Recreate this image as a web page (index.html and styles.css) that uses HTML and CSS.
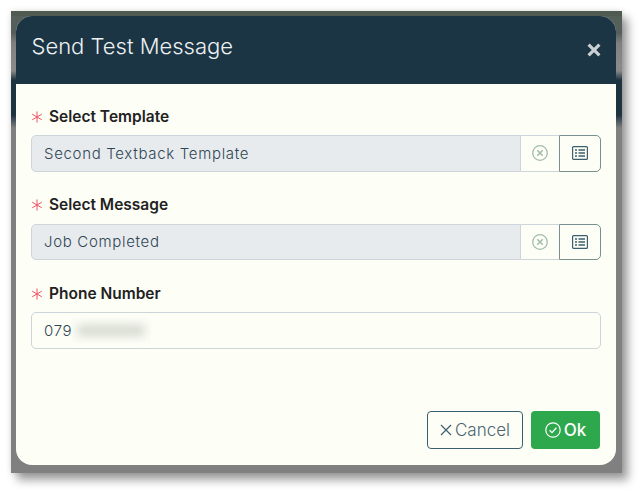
FILE: index.html
```html
<!DOCTYPE html>
<html lang="en">
<head>
<meta charset="utf-8">
<title>Send Test Message</title>
<link rel="stylesheet" href="styles.css">
</head>
<body>
<div class="backdrop">
  <div class="dialog">
    <header class="dialog-head">
      <h1 class="dialog-title">Send Test Message</h1>
      <button class="close" type="button" aria-label="Close">
        <svg viewBox="0 0 14 14" width="14" height="14"><path d="M1.6 1.6l10.8 10.8M12.4 1.6L1.6 12.4" stroke="#c9cfd2" stroke-width="3.2" fill="none"/></svg>
      </button>
    </header>
    <div class="dialog-body">
      <div class="field">
        <div class="label"><svg class="req" viewBox="0 0 12 12" width="12" height="12"><path d="M6 .4v11.2M1.2 3.2l9.6 5.6M10.8 3.2l-9.6 5.6" stroke="#ee5566" stroke-width="1" fill="none"/></svg>Select Template</div>
        <div class="input-group">
          <div class="control disabled">Second Textback Template</div>
          <div class="addon"><svg viewBox="0 0 18 18" width="18" height="18"><circle cx="9" cy="9" r="7.3" fill="none" stroke="#a3bcae" stroke-width="1.3"/><path d="M6.3 6.3l5.4 5.4M11.7 6.3l-5.4 5.4" stroke="#a3bcae" stroke-width="1.6" fill="none"/></svg></div>
          <div class="addon picker"><svg viewBox="0 0 16 14" width="16" height="14"><rect x=".6" y=".6" width="14.8" height="12.8" rx="1" fill="none" stroke="#3b5f6e" stroke-width="1.2"/><path d="M3 4h2M3 7h2M3 10h2M6.5 4H13M6.5 7H13M6.5 10H13" stroke="#3b5f6e" stroke-width="1.5" fill="none"/></svg></div>
        </div>
      </div>
      <div class="field">
        <div class="label"><svg class="req" viewBox="0 0 12 12" width="12" height="12"><path d="M6 .4v11.2M1.2 3.2l9.6 5.6M10.8 3.2l-9.6 5.6" stroke="#ee5566" stroke-width="1" fill="none"/></svg>Select Message</div>
        <div class="input-group">
          <div class="control disabled">Job Completed</div>
          <div class="addon"><svg viewBox="0 0 18 18" width="18" height="18"><circle cx="9" cy="9" r="7.3" fill="none" stroke="#a3bcae" stroke-width="1.3"/><path d="M6.3 6.3l5.4 5.4M11.7 6.3l-5.4 5.4" stroke="#a3bcae" stroke-width="1.6" fill="none"/></svg></div>
          <div class="addon picker"><svg viewBox="0 0 16 14" width="16" height="14"><rect x=".6" y=".6" width="14.8" height="12.8" rx="1" fill="none" stroke="#3b5f6e" stroke-width="1.2"/><path d="M3 4h2M3 7h2M3 10h2M6.5 4H13M6.5 7H13M6.5 10H13" stroke="#3b5f6e" stroke-width="1.5" fill="none"/></svg></div>
        </div>
      </div>
      <div class="field">
        <div class="label"><svg class="req" viewBox="0 0 12 12" width="12" height="12"><path d="M6 .4v11.2M1.2 3.2l9.6 5.6M10.8 3.2l-9.6 5.6" stroke="#ee5566" stroke-width="1" fill="none"/></svg>Phone Number</div>
        <div class="control plain">079<span class="blur"><span class="blur-smear"></span></span></div>
      </div>
    </div>
    <footer class="dialog-foot">
      <button class="btn btn-cancel" type="button"><svg viewBox="0 0 12 12" width="12" height="12"><path d="M1 1l10 10M11 1L1 11" stroke="#3b5f6e" stroke-width="1.2" fill="none"/></svg>Cancel</button>
      <button class="btn btn-ok" type="button"><svg viewBox="0 0 16 16" width="16" height="16"><circle cx="8" cy="8" r="7.2" fill="none" stroke="#fff" stroke-width="1.2"/><path d="M4.6 8.2l2.4 2.4 4.4-4.8" stroke="#fff" stroke-width="1.3" fill="none"/></svg>Ok</button>
    </footer>
  </div>
</div>
</body>
</html>
```

FILE: styles.css
```css
* { box-sizing: border-box; }
html, body { margin: 0; height: 100%; background: #fff; }
body { padding: 11px 19px 19px 11px; font-family: "Inter", "Liberation Sans", sans-serif; }
.backdrop {
  width: 611px;
  height: 462px;
  padding: 5px 6px 8px 5px;
  background:
    linear-gradient(#4f5b50 5px, transparent 5px),
    linear-gradient(#55605a 0, #55605a 22px, #808080 32px, #8a8a8a 55px, #888 60px, #1e3340 69px, #1e3340 104px, #808080 117px);
  box-shadow: 6px 7px 9px rgba(0,0,0,.38), 0 0 6px rgba(0,0,0,.12);
}
.dialog {
  height: 449px;
  display: flex;
  flex-direction: column;
  background: #fdfef6;
  border-radius: 16px;
  overflow: hidden;
}
.dialog-head {
  height: 68px;
  flex: none;
  background: #1b3544;
  display: flex;
  justify-content: space-between;
  padding: 0 15px 0 15.5px;
}
.dialog-title { margin: 15px 0 0; font-size: 22px; line-height: 30px; font-weight: 300; color: #eef1f2; }
.close { border: 0; background: none; padding: 0; margin-top: 27px; margin-right: .5px; height: 14px; line-height: 0; }
.dialog-body { flex: 1; padding: 20px 15px 0; }
.field { margin-bottom: 21px; }
.label { display: flex; align-items: center; height: 23px; padding-top: 1px; margin-bottom: 8px; font-size: 15.5px; font-weight: 600; color: #222; }
.req { flex: none; margin-right: 6px; margin-top: 1px; }
.input-group { display: flex; height: 36.5px; }
.control { height: 36.5px; flex: 1; display: flex; align-items: center; padding: 0 12px; font-size: 15px; font-weight: 300; letter-spacing: .68px; color: #2f4654; border: 1px solid #cdd4da; border-radius: 5px; }
.disabled { background: #e8ebee; border-radius: 5px 0 0 5px; border-right: 1px solid #cdd4da; }
.plain { background: #fdfef6; }
.addon { width: 38.5px; flex: none; display: flex; align-items: center; justify-content: center; border: 1px solid #cdd4da; border-width: 1px 0; }
.picker { width: 42px; border: 1px solid #7a8f90; border-radius: 0 5px 5px 0; }
.blur { width: 78px; height: 24px; display: flex; align-items: center; justify-content: center; background: #fbfcf6; }
.blur-smear { width: 68px; height: 11px; background: #d6dad0; border-radius: 5px; filter: blur(4px); }
.dialog-foot { flex: none; display: flex; justify-content: flex-end; gap: 8px; padding: 0 16px 16px; }
.btn { height: 38px; display: flex; align-items: center; justify-content: center; gap: 3px; border-radius: 4px; font-family: inherit; font-size: 17px; padding: 0; }
.btn-cancel { width: 96px; background: transparent; border: 1px solid #3b5f6e; color: #4b6572; font-weight: 300; }
.btn-ok { width: 69px; background: #2ea84c; border: 0; color: #fff; font-weight: 500; }
```
